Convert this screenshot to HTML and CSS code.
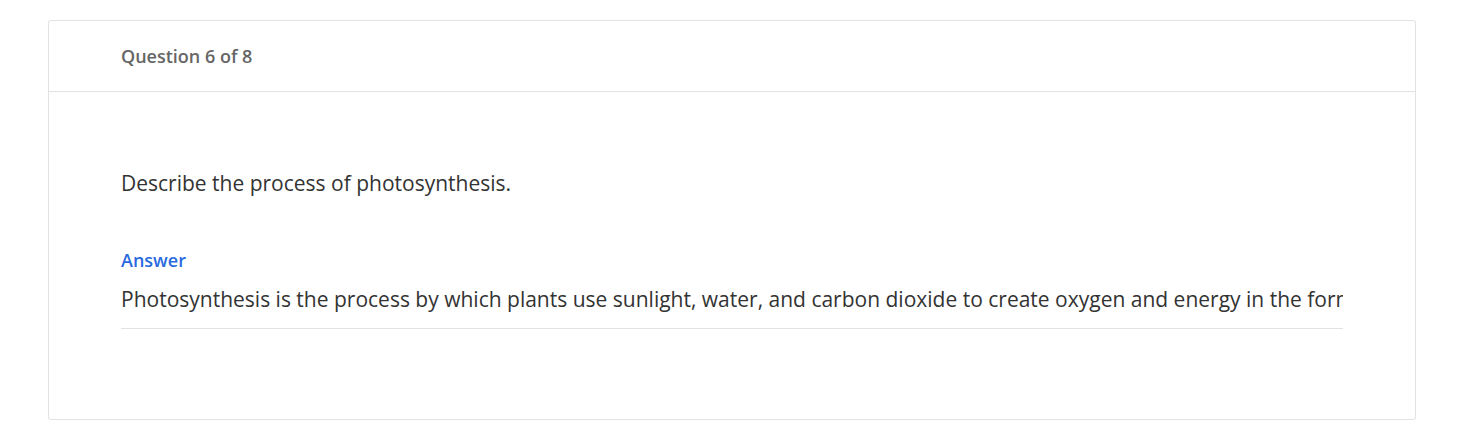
FILE: index.html
```html
<!DOCTYPE html>
<html lang="en">

<head>
    <meta charset="UTF-8">
    <meta name="viewport" content="width=device-width, initial-scale=1.0">
    <title>Quiz</title>
    <link rel="stylesheet" href="styles.css">
</head>

<body>

    <div class="question-card">
        <div class="card-header">
            <span class="question-count">Question 6 of 8</span>
        </div>

        <div class="card-body">
            <p class="question-text">Describe the process of photosynthesis.</p>

            <label class="answer-label" for="answer">Answer</label>
            <input type="text" id="answer" class="answer-input"
                value="Photosynthesis is the process by which plants use sunlight, water, and carbon dioxide to create oxygen and energy in the form of sugar.">
        </div>
    </div>

</body>

</html>
```

FILE: styles.css
```css
body {
    margin: 0;
    padding: 20px 44px 24px 48px;
    font-family: "Open Sans", sans-serif;
    background: #fff;
}

.question-card {
    border: 1px solid #e2e2e2;
    border-radius: 3px;
    background: #fff;
}

.card-header {
    height: 70px;
    display: flex;
    align-items: center;
    padding: 0 72px;
    border-bottom: 1px solid #e2e2e2;
}

.question-count {
    font-size: 18px;
    font-weight: 600;
    color: #666;
}

.card-body {
    padding: 75px 72px 90px;
}

.question-text {
    margin: 0 0 48px;
    font-size: 21px;
    line-height: 32px;
    color: #333;
}

.answer-label {
    display: block;
    font-size: 18px;
    font-weight: 600;
    line-height: 26px;
    color: #2a6ae0;
    margin-bottom: 10px;
}

.answer-input {
    display: block;
    width: 100%;
    box-sizing: border-box;
    border: none;
    border-bottom: 1px solid #e2e2e2;
    padding: 0 0 13px;
    font-family: "Open Sans", sans-serif;
    font-size: 21px;
    line-height: 32px;
    color: #333;
    outline: none;
    background: transparent;
}
```
